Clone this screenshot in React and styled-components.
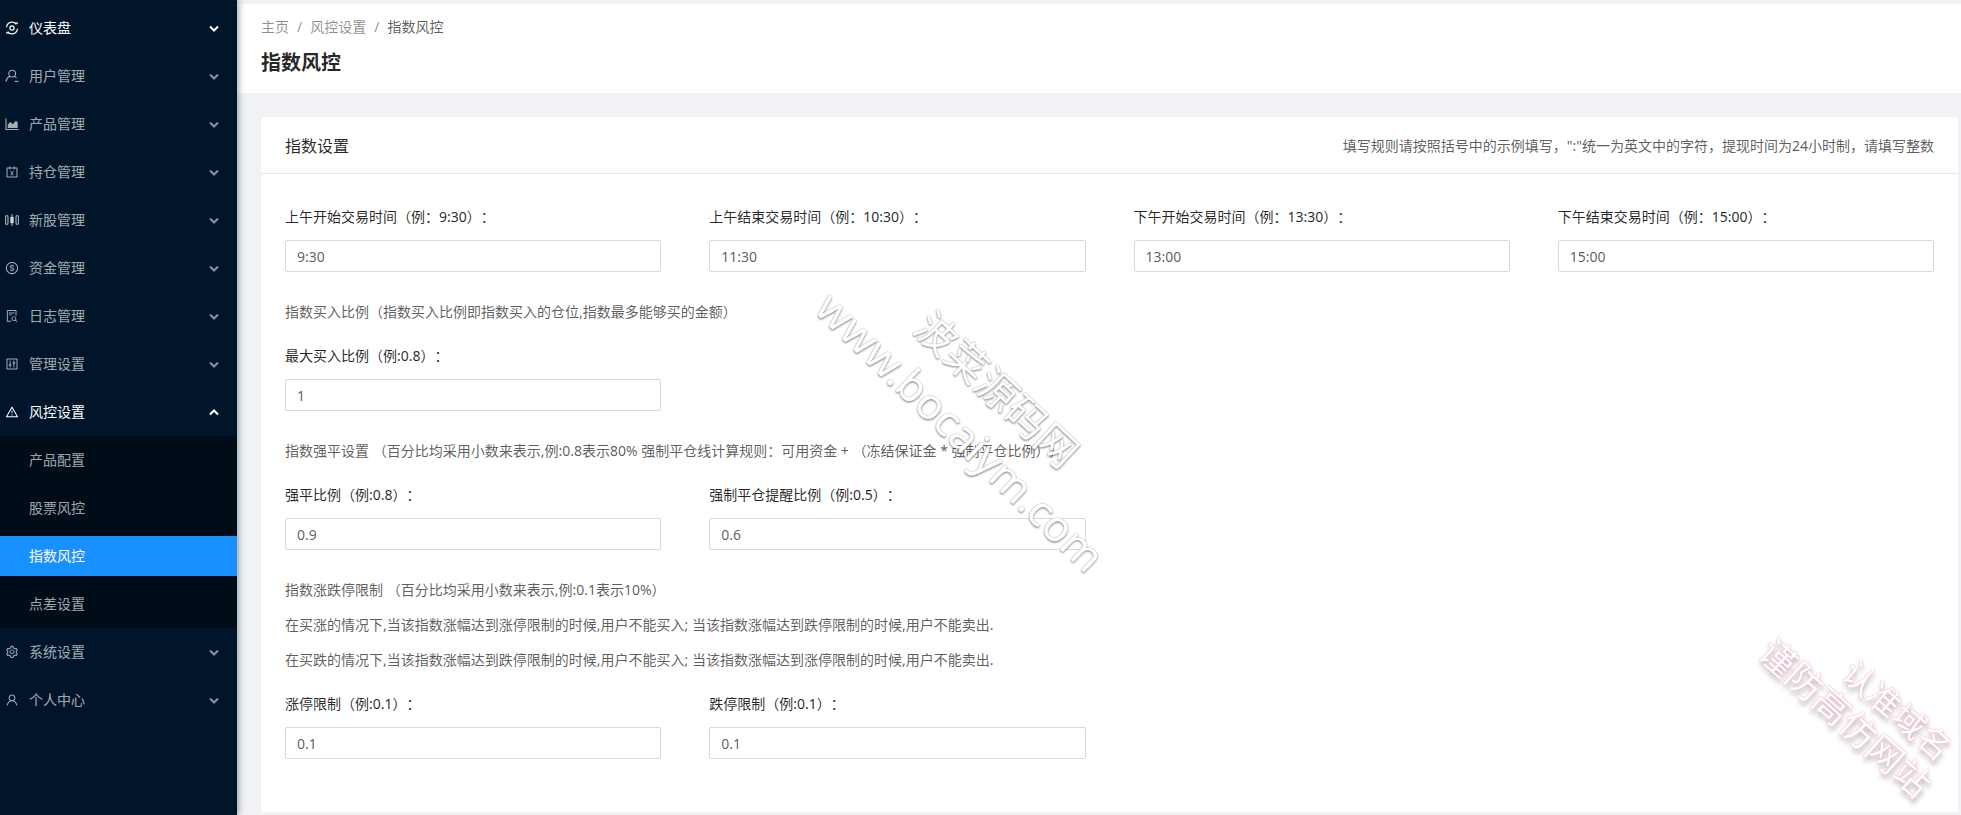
import React from 'react'
import styled, { createGlobalStyle } from 'styled-components'
import {
  AiOutlineAccountBook,
  AiOutlineDollarCircle,
  AiOutlineFileSearch,
  AiOutlineControl,
  AiOutlineWarning,
  AiOutlineSetting,
  AiOutlineUser,
} from 'react-icons/ai'

const GlobalStyle = createGlobalStyle`
  html, body {
    margin: 0;
    padding: 0;
    height: 100%;
    overflow: hidden;
    font-family: "Noto Sans", "Noto Sans CJK SC", sans-serif;
    font-size: 14px;
    text-spacing-trim: space-all;
    background: #f0f2f5;
  }
`

const Page = styled.div`
  position: relative;
  display: flex;
  height: 815px;
  overflow: hidden;
`

const Sidebar = styled.aside`
  width: 237px;
  flex: none;
  padding-top: 4px;
  background: #001529;
  box-shadow: 2px 0 6px rgba(0, 21, 41, 0.35);
  z-index: 2;
`

const MenuItem = styled.div`
  display: flex;
  align-items: center;
  height: 48px;
  padding: 0 18px 0 5px;
  color: ${(p) => (p.$open ? '#fff' : 'rgba(255, 255, 255, 0.65)')};
`

const MenuIcon = styled.span`
  display: flex;
  align-items: center;
  justify-content: center;
  width: 14px;
  height: 14px;
  margin-right: 10px;
  font-size: 14px;
`

const MenuLabel = styled.span`
  flex: 1;
  padding-bottom: 2px;
`

const Arrow = styled.svg`
  width: 10px;
  height: 7px;
  opacity: ${(p) => (p.$open ? 1 : 0.55)};
  transform: ${(p) => (p.$up ? 'rotate(180deg)' : 'none')};
`

const SubMenu = styled.div`
  display: flex;
  flex-direction: column;
  gap: 8px;
  padding: 4px 0;
  background: #000c17;
`

const SubItem = styled.div`
  display: flex;
  align-items: center;
  height: 40px;
  box-sizing: border-box;
  padding: 0 0 2px 29px;
  color: ${(p) => (p.$active ? '#fff' : 'rgba(255, 255, 255, 0.65)')};
  background: ${(p) => (p.$active ? '#1890ff' : 'transparent')};
`

const Main = styled.main`
  flex: 1;
  min-width: 0;
  padding-top: 4px;
`

const PageHeader = styled.header`
  height: 89px;
  box-sizing: border-box;
  padding: 12px 24px 0;
  background: #fff;
`

const Breadcrumb = styled.div`
  display: flex;
  gap: 8px;
  line-height: 22px;
  color: rgba(0, 0, 0, 0.45);
`

const CrumbLast = styled.span`
  color: rgba(0, 0, 0, 0.65);
`

const PageTitle = styled.h1`
  margin: 11px 0 0;
  font-size: 20px;
  line-height: 28px;
  font-weight: 700;
  color: rgba(0, 0, 0, 0.85);
`

const Content = styled.div`
  padding: 24px 3px 3px 24px;
`

const Card = styled.section`
  background: #fff;
  border-radius: 2px;
`

const CardHead = styled.div`
  display: flex;
  align-items: center;
  justify-content: space-between;
  height: 56px;
  padding: 0 24px;
  border-bottom: 1px solid #e8e8e8;
`

const CardTitle = styled.div`
  font-size: 16px;
  color: rgba(0, 0, 0, 0.85);
`

const CardExtra = styled.div`
  color: rgba(0, 0, 0, 0.65);
`

const CardBody = styled.div`
  padding: 32px 24px 53px;
`

const FieldRow = styled.div`
  display: grid;
  grid-template-columns: repeat(4, 1fr);
  column-gap: 48px;
  margin-top: ${(p) => (p.$first ? '0' : '22px')};
`

const Field = styled.label`
  display: block;
`

const FieldLabel = styled.div`
  margin-bottom: 12px;
  line-height: 22px;
  color: rgba(0, 0, 0, 0.85);
`

const Input = styled.input`
  display: block;
  width: 100%;
  height: 32px;
  box-sizing: border-box;
  padding: 0 11px;
  border: 1px solid #d9d9d9;
  border-radius: 2px;
  outline: none;
  font: inherit;
  color: rgba(0, 0, 0, 0.65);
  background: #fff;
`

const HintBlock = styled.div`
  display: flex;
  flex-direction: column;
  gap: 13px;
  margin-top: 29px;
`

const Hint = styled.div`
  line-height: 22px;
  color: rgba(0, 0, 0, 0.65);
`

const SiteMark = styled.div`
  position: absolute;
  left: ${(p) => p.$x}px;
  top: ${(p) => p.$y}px;
  transform: translate(-50%, -50%) rotate(${(p) => p.$angle}deg);
  white-space: nowrap;
  font-size: ${(p) => p.$size}px;
  line-height: 1;
  color: #fff;
  text-shadow: 0 0 1px #888, 1px 1px 2px rgba(0, 0, 0, 0.4);
  pointer-events: none;
  z-index: 3;
`

const PinkMark = styled(SiteMark)`
  text-shadow: 0 0 1px #ff9ccb, 0 0 1px #ff9ccb, 3px 3px 5px rgba(0, 0, 0, 0.3);
`

const DashIcon = () => (
  <svg width="14" height="14" viewBox="0 0 14 14" fill="none" stroke="currentColor" strokeWidth="1.2">
    <path d="M1.6 6.2A5.4 5.4 0 0 1 11.4 3.4" />
    <path d="M12.4 7.8A5.4 5.4 0 0 1 2.6 10.6" />
    <path d="M1 11.8h3M10 2.2h3" />
    <circle cx="7" cy="7" r="2.1" />
  </svg>
)

const UserIcon = () => (
  <svg width="14" height="14" viewBox="0 0 14 14" fill="none" stroke="currentColor" strokeWidth="1.1">
    <circle cx="7.2" cy="4.6" r="3.4" />
    <path d="M4.8 7.2C2.6 8.2 1.3 10 1 12.6" />
    <path d="M9.6 7.4c.8.4 1.4.9 1.9 1.5" />
    <path d="M9.6 12.4h3.8" />
  </svg>
)

const AreaIcon = () => (
  <svg width="14" height="14" viewBox="0 0 14 14" fill="none" stroke="currentColor" strokeWidth="1.1">
    <path d="M1 1.5v11h12.5" />
    <path d="M2.8 11V7.4L5.4 5l2.5 2.2 3-3.4 1.8 1.6V11z" fill="currentColor" stroke="none" />
  </svg>
)

const CandleIcon = () => (
  <svg width="14" height="14" viewBox="0 0 14 14" fill="none" stroke="currentColor" strokeWidth="1.1">
    <rect x="0.6" y="2.6" width="2.4" height="8.8" rx="1.2" />
    <rect x="5.8" y="4.4" width="2.4" height="5.2" fill="currentColor" />
    <path d="M7 1v12" />
    <rect x="11" y="2.6" width="2.4" height="8.8" rx="1.2" />
  </svg>
)

const menuTop = [
  { name: '仪表盘', icon: <DashIcon />, open: true },
  { name: '用户管理', icon: <UserIcon /> },
  { name: '产品管理', icon: <AreaIcon /> },
  { name: '持仓管理', icon: <AiOutlineAccountBook /> },
  { name: '新股管理', icon: <CandleIcon /> },
  { name: '资金管理', icon: <AiOutlineDollarCircle /> },
  { name: '日志管理', icon: <AiOutlineFileSearch /> },
  { name: '管理设置', icon: <AiOutlineControl /> },
]

const menuBottom = [
  { name: '系统设置', icon: <AiOutlineSetting /> },
  { name: '个人中心', icon: <AiOutlineUser /> },
]

const subItems = ['产品配置', '股票风控', '指数风控', '点差设置']

const Chevron = ({ open, up }) => (
  <Arrow $open={open} $up={up} viewBox="0 0 10 7" fill="none" stroke="#fff" strokeWidth="2">
    <path d="M1 1.5l4 4 4-4" />
  </Arrow>
)

const Item = ({ item, up }) => (
  <MenuItem $open={item.open}>
    <MenuIcon>{item.icon}</MenuIcon>
    <MenuLabel>{item.name}</MenuLabel>
    <Chevron open={item.open} up={up} />
  </MenuItem>
)

const FieldBox = ({ label, value }) => (
  <Field>
    <FieldLabel>{label}</FieldLabel>
    <Input readOnly value={value} />
  </Field>
)

const App = () => (
  <>
    <GlobalStyle />
    <Page>
      <Sidebar>
        {menuTop.map((item) => (
          <Item key={item.name} item={item} />
        ))}
        <Item item={{ name: '风控设置', icon: <AiOutlineWarning />, open: true }} up />
        <SubMenu>
          {subItems.map((name) => (
            <SubItem key={name} $active={name === '指数风控'}>
              {name}
            </SubItem>
          ))}
        </SubMenu>
        {menuBottom.map((item) => (
          <Item key={item.name} item={item} />
        ))}
      </Sidebar>
      <Main>
        <PageHeader>
          <Breadcrumb>
            <span>主页</span>
            <span>/</span>
            <span>风控设置</span>
            <span>/</span>
            <CrumbLast>指数风控</CrumbLast>
          </Breadcrumb>
          <PageTitle>指数风控</PageTitle>
        </PageHeader>
        <Content>
          <Card>
            <CardHead>
              <CardTitle>指数设置</CardTitle>
              <CardExtra>填写规则请按照括号中的示例填写，":"统一为英文中的字符，提现时间为24小时制，请填写整数</CardExtra>
            </CardHead>
            <CardBody>
              <FieldRow $first>
                <FieldBox label="上午开始交易时间（例：9:30）：" value="9:30" />
                <FieldBox label="上午结束交易时间（例：10:30）：" value="11:30" />
                <FieldBox label="下午开始交易时间（例：13:30）：" value="13:00" />
                <FieldBox label="下午结束交易时间（例：15:00）：" value="15:00" />
              </FieldRow>
              <HintBlock>
                <Hint>指数买入比例（指数买入比例即指数买入的仓位,指数最多能够买的金额）</Hint>
              </HintBlock>
              <FieldRow>
                <FieldBox label="最大买入比例（例:0.8）：" value="1" />
              </FieldRow>
              <HintBlock>
                <Hint>指数强平设置 （百分比均采用小数来表示,例:0.8表示80% 强制平仓线计算规则：可用资金 + （冻结保证金 * 强制平仓比例））</Hint>
              </HintBlock>
              <FieldRow>
                <FieldBox label="强平比例（例:0.8）：" value="0.9" />
                <FieldBox label="强制平仓提醒比例（例:0.5）：" value="0.6" />
              </FieldRow>
              <HintBlock>
                <Hint>指数涨跌停限制 （百分比均采用小数来表示,例:0.1表示10%）</Hint>
                <Hint>在买涨的情况下,当该指数涨幅达到涨停限制的时候,用户不能买入; 当该指数涨幅达到跌停限制的时候,用户不能卖出.</Hint>
                <Hint>在买跌的情况下,当该指数涨幅达到跌停限制的时候,用户不能买入; 当该指数涨幅达到涨停限制的时候,用户不能卖出.</Hint>
              </HintBlock>
              <FieldRow>
                <FieldBox label="涨停限制（例:0.1）：" value="0.1" />
                <FieldBox label="跌停限制（例:0.1）：" value="0.1" />
              </FieldRow>
            </CardBody>
          </Card>
        </Content>
      </Main>
      <SiteMark $x={997} $y={389} $angle={43} $size={41}>波菜源码网</SiteMark>
      <SiteMark $x={961} $y={431} $angle={44} $size={43}>www.bocaiym.com</SiteMark>
      <PinkMark $x={1897} $y={710} $angle={41} $size={33}>认准域名</PinkMark>
      <PinkMark $x={1845} $y={718} $angle={42} $size={36}>谨防高仿网站</PinkMark>
    </Page>
  </>
)

export default App
